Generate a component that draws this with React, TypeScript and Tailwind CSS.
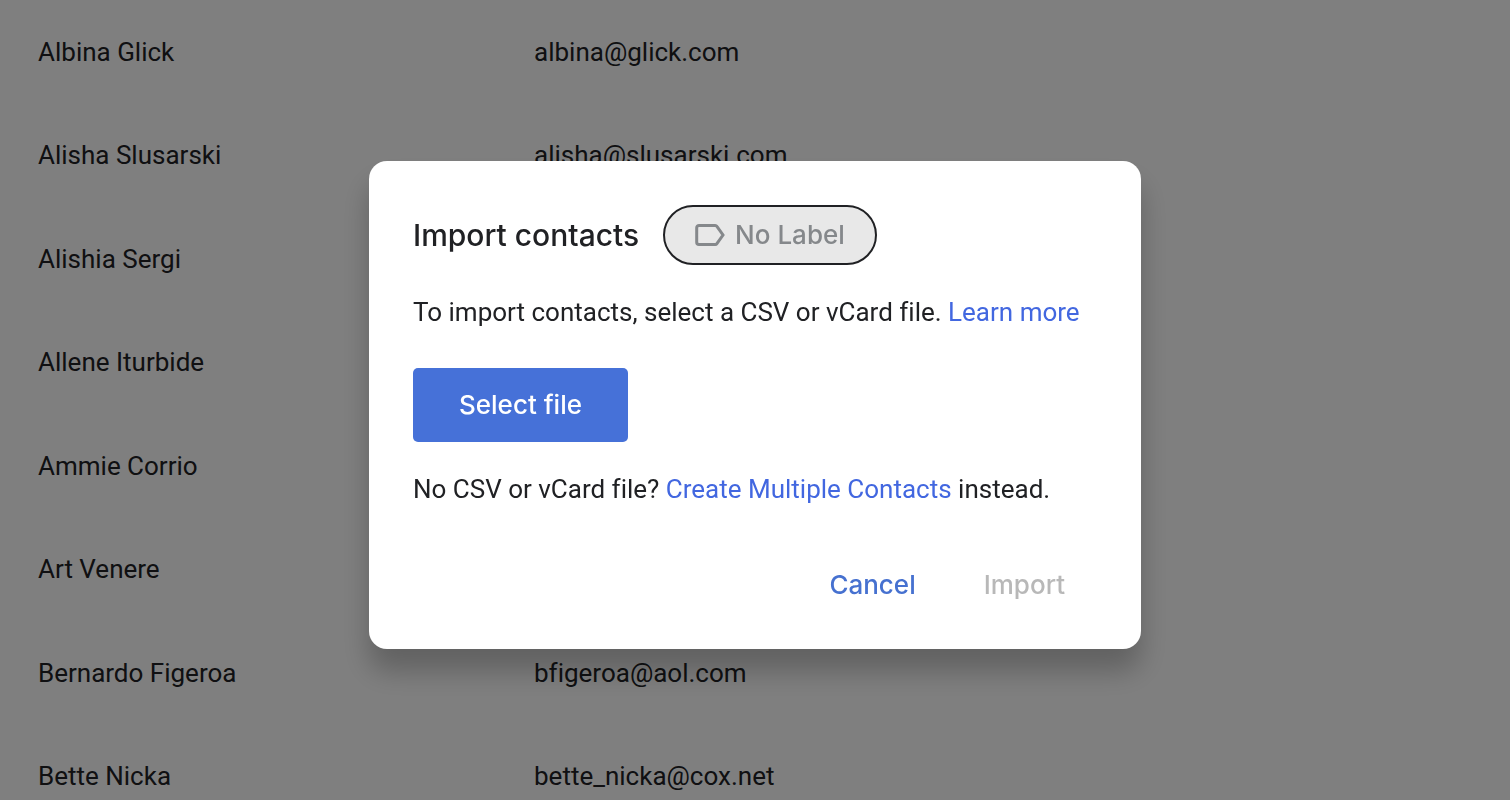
import { useState } from 'react'

const contacts = [
  { name: 'Albina Glick', email: 'albina@glick.com' },
  { name: 'Alisha Slusarski', email: 'alisha@slusarski.com' },
  { name: 'Alishia Sergi' },
  { name: 'Allene Iturbide' },
  { name: 'Ammie Corrio' },
  { name: 'Art Venere' },
  { name: 'Bernardo Figeroa', email: 'bfigeroa@aol.com' },
  { name: 'Bette Nicka', email: 'bette_nicka@cox.net' },
]

function LabelIcon() {
  return (
    <svg aria-hidden width="30" height="22" viewBox="0 0 30 22" fill="none" stroke="currentColor" strokeWidth="3">
      <path d="M4 1.5h16.2c.7 0 1.3.3 1.7.9L28 11l-6.1 8.6c-.4.6-1 .9-1.7.9H4a2.3 2.3 0 0 1-2.3-2.3V3.8A2.3 2.3 0 0 1 4 1.5Z" />
    </svg>
  )
}

function ContactTable() {
  return (
    <table className="h-[828px] w-full table-fixed text-left">
      <tbody>
        {contacts.map(({ name, email }) => (
          <tr key={name}>
            <td className="w-[534px] pl-[38px]">{name}</td>
            <td>{email}</td>
          </tr>
        ))}
      </tbody>
    </table>
  )
}

function ImportDialog({ onClose }: { onClose: () => void }) {
  return (
    <div className="fixed inset-0 flex items-center justify-center bg-black/50 pt-[10px]">
      <div
        role="dialog"
        aria-modal="true"
        aria-labelledby="import-title"
        className="w-[772px] max-w-full rounded-[18px] bg-white px-11 pt-11 pb-8 shadow-[0_22px_28px_rgba(0,0,0,0.24)]"
      >
        <div className="flex items-center gap-6">
          <h2 id="import-title" className="font-['Inter',sans-serif] text-[30px] leading-10 font-medium">
            Import contacts
          </h2>
          <button className="flex h-15 items-center gap-[10px] rounded-full border-2 border-[#202124] bg-[#e8e8e8] px-[30px] font-['Inter',sans-serif] font-medium text-[#85888b]">
            <LabelIcon />
            No Label
          </button>
        </div>

        <p className="mt-[27px]">
          To import contacts, select a CSV or vCard file.{' '}
          <a href="#learn" className="text-[#4267e0]">
            Learn more
          </a>
        </p>

        <button className="mt-9 h-[74px] rounded-[5px] bg-[#4671d8] px-[46px] font-['Inter',sans-serif] font-medium text-white">
          Select file
        </button>

        <p className="mt-[27px]">
          No CSV or vCard file?{' '}
          <a href="#create" className="text-[#4267e0]">
            Create Multiple Contacts
          </a>{' '}
          instead.
        </p>

        <div className="mt-11 flex justify-end gap-1 font-['Inter',sans-serif] font-medium">
          <button onClick={onClose} className="h-16 px-8 text-[#4671d0]">
            Cancel
          </button>
          <button disabled className="h-16 px-8 text-[#b8b8b8]">
            Import
          </button>
        </div>
      </div>
    </div>
  )
}

export default function App() {
  const [open, setOpen] = useState(true)

  return (
    <main className="h-screen overflow-hidden bg-white font-['Roboto',sans-serif] text-[26px] leading-10 text-[#202124] [font-variant-ligatures:none]">
      <ContactTable />
      {open && <ImportDialog onClose={() => setOpen(false)} />}
    </main>
  )
}
